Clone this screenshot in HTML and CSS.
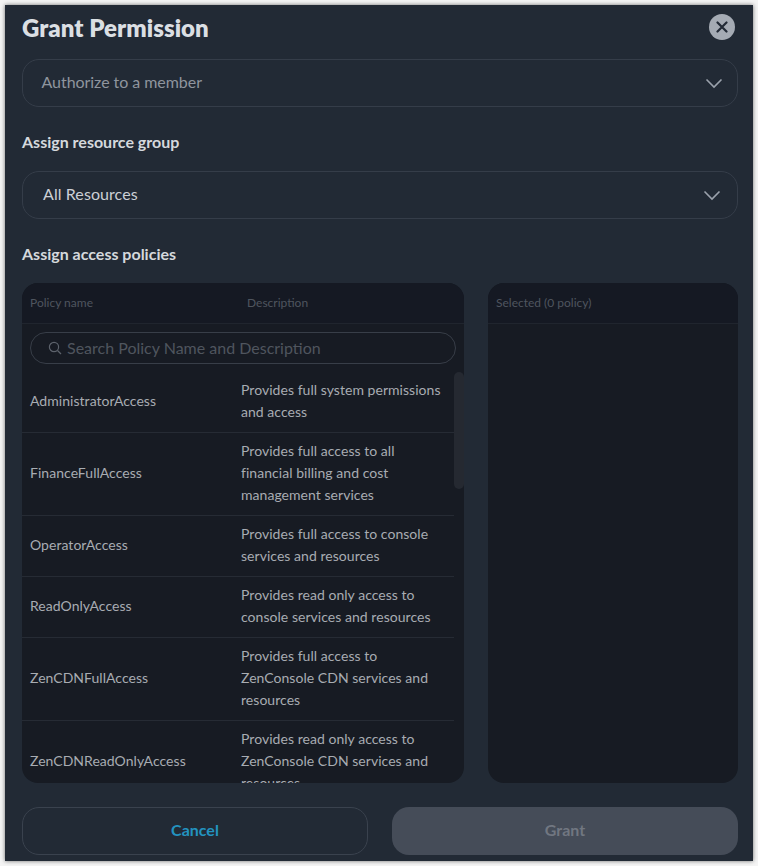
FILE: index.html
```html
<!DOCTYPE html>
<html lang="en">
<head>
<meta charset="utf-8">
<title>Grant Permission</title>
<link rel="stylesheet" href="styles.css">
</head>
<body>
<div class="dialog">
  <header class="title-row">
    <h1 class="title">Grant Permission</h1>
    <button class="close" aria-label="Close">
      <svg width="12" height="12" viewBox="0 0 12 12"><path d="M1.5 1.5l9 9M10.5 1.5l-9 9" fill="none" stroke="#222a36" stroke-width="2.2" stroke-linecap="round"/></svg>
    </button>
  </header>
  <div class="select select-member">
    <span class="placeholder">Authorize to a member</span>
    <svg class="chev" width="18" height="11" viewBox="0 0 18 11"><path d="M1.5 1.5L9 9l7.5-7.5" fill="none" stroke="#9ba2ac" stroke-width="1.6"/></svg>
  </div>
  <h2 class="label">Assign resource group</h2>
  <div class="select select-group">
    <span class="value">All Resources</span>
    <svg class="chev" width="18" height="11" viewBox="0 0 18 11"><path d="M1.5 1.5L9 9l7.5-7.5" fill="none" stroke="#9ba2ac" stroke-width="1.6"/></svg>
  </div>
  <h2 class="label">Assign access policies</h2>
  <div class="panels">
    <section class="panel panel-left">
      <div class="panel-head">
        <span class="col-name">Policy name</span>
        <span class="col-desc">Description</span>
      </div>
      <div class="search">
        <svg width="14" height="14" viewBox="0 0 14 14"><circle cx="6" cy="6" r="4.6" fill="none" stroke="#5d636c" stroke-width="1.2"/><path d="M9.5 9.5L13 13" stroke="#5d636c" stroke-width="1.2"/></svg>
        <span class="search-text">Search Policy Name and Description</span>
      </div>
      <div class="list">
        <div class="row"><div class="name">AdministratorAccess</div><div class="desc">Provides full system permissions and access</div></div>
        <div class="row"><div class="name">FinanceFullAccess</div><div class="desc">Provides full access to all<br>financial billing and cost<br>management services</div></div>
        <div class="row"><div class="name">OperatorAccess</div><div class="desc">Provides full access to console services and resources</div></div>
        <div class="row"><div class="name">ReadOnlyAccess</div><div class="desc">Provides read only access to<br>console services and resources</div></div>
        <div class="row"><div class="name">ZenCDNFullAccess</div><div class="desc">Provides full access to<br>ZenConsole CDN services and<br>resources</div></div>
        <div class="row"><div class="name">ZenCDNReadOnlyAccess</div><div class="desc">Provides read only access to<br>ZenConsole CDN services and<br>resources</div></div>
      </div>
      <div class="scrollbar"></div>
    </section>
    <section class="panel panel-right">
      <div class="panel-head"><span class="selected">Selected (0 policy)</span></div>
    </section>
  </div>
  <footer class="actions">
    <button class="btn cancel">Cancel</button>
    <button class="btn grant">Grant</button>
  </footer>
</div>
</body>
</html>
```
FILE: styles.css
```css
* { box-sizing: border-box; }
html, body { margin: 0; height: 100%; }
body {
  background: #f4f4f4;
  padding: 5px;
  font-family: "Lato", "Noto Sans", sans-serif;
  overflow: hidden;
}
.dialog {
  width: 748px;
  height: 856px;
  background: #222a35;
  padding: 0 15px 6px 17px;
  display: flex;
  flex-direction: column;
  box-shadow: 0 0 4px rgba(0, 0, 0, 0.55);
}
.title-row {
  height: 54px;
  display: flex;
  align-items: center;
  justify-content: space-between;
  padding: 0 3px 10px 0;
  flex: none;
}
.title {
  margin: 0;
  font-size: 24px;
  font-weight: 800;
  color: #dbdfe3;
  letter-spacing: 0.05px;
}
.close {
  width: 26px;
  height: 26px;
  border: 0;
  padding: 0;
  border-radius: 50%;
  background: #a5abb4;
  display: flex;
  align-items: center;
  justify-content: center;
}
.select {
  height: 48px;
  flex: none;
  border: 1px solid #353d49;
  border-radius: 17px;
  display: flex;
  align-items: center;
  justify-content: space-between;
}
.select-member { padding: 0 14px 0 18.5px; }
.select-group { padding: 0 16px 0 20px; }
.placeholder { font-size: 16px; color: #8f959e; padding-bottom: 3px; letter-spacing: -0.05px; }
.value { font-size: 16px; color: #ccd0d5; padding-bottom: 3px; letter-spacing: 0.08px; }
.label {
  margin: 0;
  height: 64px;
  flex: none;
  display: flex;
  align-items: center;
  padding-top: 4px;
  font-size: 16px;
  font-weight: 700;
  color: #d5d9dd;
}
.panels {
  height: 500px;
  flex: none;
  display: flex;
  gap: 24px;
}
.panel {
  background: #171b23;
  border-radius: 16px;
  overflow: hidden;
  position: relative;
}
.panel-left { width: 442px; }
.panel-right { width: 250px; }
.panel-head {
  height: 41px;
  background: #151923;
  border-bottom: 1px solid #20252e;
  padding: 0 8px 1px;
  display: flex;
  align-items: center;
  font-size: 12px;
  color: #4f555f;
}
.col-name { width: 217px; }
.search {
  margin: 8px 8px 0;
  height: 32px;
  border: 1px solid #383e48;
  border-radius: 16px;
  display: flex;
  align-items: center;
  gap: 5px;
  padding-left: 17px;
}
.search-text { font-size: 16px; color: #4f555e; padding-bottom: 1px; }
.list {
  margin-top: 8px;
  width: 432px;
}
.row {
  display: grid;
  grid-template-columns: 211px 1fr;
  align-items: center;
  padding: 7px 0 9px 8px;
  border-bottom: 1px solid #262b34;
  font-size: 14px;
  line-height: 22px;
  color: #a8acb2;
  letter-spacing: 0.04px;
}
.scrollbar {
  position: absolute;
  right: 0;
  top: 89px;
  width: 10px;
  height: 117px;
  border-radius: 5px;
  background: #252931;
}
.actions {
  margin-top: 24px;
  display: flex;
  gap: 24px;
  flex: none;
}
.btn {
  width: 346px;
  height: 48px;
  border-radius: 17px;
  padding: 0 0 3px;
  font-family: inherit;
  font-size: 16px;
  font-weight: 700;
}
.cancel {
  background: transparent;
  border: 1px solid #3a424e;
  color: #2393c0;
}
.grant {
  background: #454c58;
  border: 0;
  color: #717781;
}
```
